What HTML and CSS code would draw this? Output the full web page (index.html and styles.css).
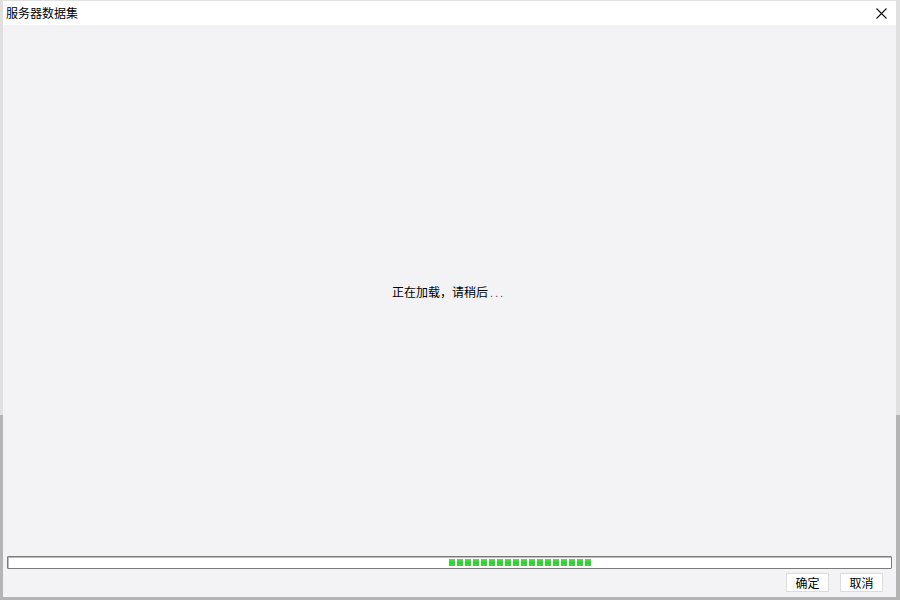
FILE: index.html
```html
<!DOCTYPE html>
<html lang="zh">
<head>
<meta charset="utf-8">
<title>服务器数据集</title>
<link rel="stylesheet" href="styles.css">
</head>
<body>
<div class="dialog">
  <div class="titlebar">
    <span class="title">服务器数据集</span>
    <span class="close">
      <svg width="11" height="11" viewBox="0 0 11 11"><path d="M0.5 0.5 L10.5 10.5 M10.5 0.5 L0.5 10.5" stroke="#111" stroke-width="1.1" fill="none"/></svg>
    </span>
  </div>
  <div class="content">
    <div class="loading">正在加载，请稍后<span class="dots">...</span></div>
  </div>
  <div class="progress">
    <div class="blocks">
      <i></i><i></i><i></i><i></i><i></i><i></i><i></i><i></i><i></i>
      <i></i><i></i><i></i><i></i><i></i><i></i><i></i><i></i><i></i>
    </div>
  </div>
  <div class="buttons">
    <button class="btn">确定</button>
    <button class="btn">取消</button>
  </div>
</div>
</body>
</html>
```
FILE: styles.css
```css
html, body {
  margin: 0;
  padding: 0;
  height: 100%;
}
body {
  background: linear-gradient(to bottom, #e0e0e0 0, #e0e0e0 415px, #b4b4b4 415px, #b4b4b4 100%);
  font-family: "Noto Sans CJK SC", "Liberation Sans", sans-serif;
  overflow: hidden;
}
.dialog {
  margin: 1px 4px 0 3px;
  height: 596px;
  background: #f3f3f5;
  display: flex;
  flex-direction: column;
}
.titlebar {
  height: 24px;
  background: #ffffff;
  display: flex;
  align-items: center;
  justify-content: space-between;
  padding: 0 9px 0 3px;
  flex: none;
}
.title {
  font-size: 12px;
  color: #000;
  line-height: 14px;
}
.close {
  display: flex;
  align-items: center;
  height: 11px;
}
.content {
  flex: 1;
  display: flex;
  align-items: center;
  justify-content: center;
}
.loading {
  font-size: 12px;
  color: #000;
  line-height: 14px;
  margin-top: 3px;
  margin-right: 2px;
}
.dots {
  color: #5a3a60;
  letter-spacing: 2px;
  margin-left: 2px;
  font-family: "Liberation Sans", sans-serif;
  font-size: 11px;
}
.progress {
  flex: none;
  margin: 0 4px;
  height: 13px;
  box-sizing: border-box;
  border: 1px solid #7a7a7a;
  box-shadow: inset 0 1px 0 #bdbdbd, inset 1px 0 0 #bdbdbd;
  background: #ffffff;
  border-radius: 1px;
  display: flex;
  align-items: center;
  padding-left: 441px;
}
.blocks {
  display: flex;
  gap: 2px;
}
.blocks i {
  display: block;
  width: 6px;
  height: 7px;
  background: linear-gradient(to bottom, #5fe35f 0, #2fcf2f 45%, #3dd83d 100%);
}
.buttons {
  flex: none;
  display: flex;
  justify-content: flex-end;
  gap: 11px;
  padding: 4px 13px 5px 0;
}
.btn {
  width: 43px;
  height: 19px;
  box-sizing: border-box;
  border: 1px solid #dcdcdc;
  background: #ffffff;
  font-family: "Noto Sans CJK SC", "Liberation Sans", sans-serif;
  font-size: 12px;
  line-height: 15px;
  padding: 0;
  color: #000;
}
```
